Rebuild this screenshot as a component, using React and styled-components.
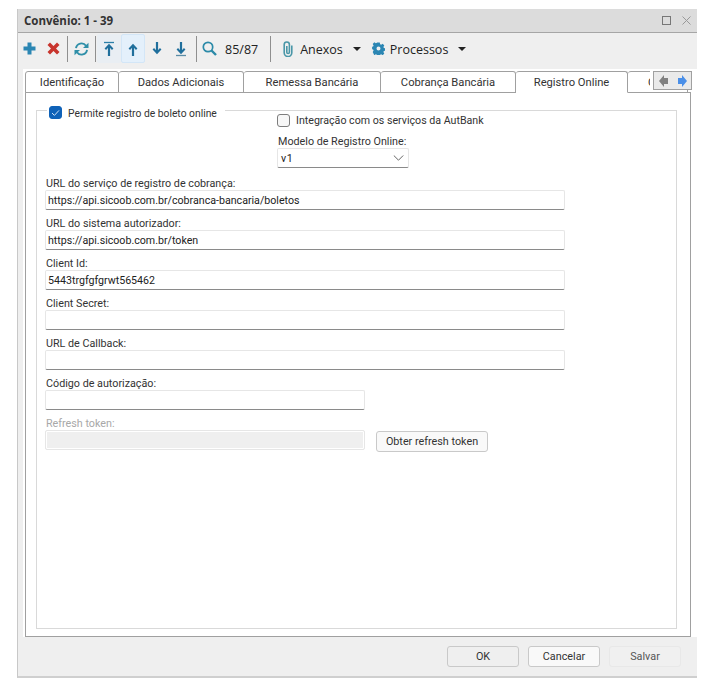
import React from "react";
import styled, { createGlobalStyle } from "styled-components";

const Global = createGlobalStyle`
  html, body { margin: 0; padding: 0; background: #fff; }
  body { font-family: "Roboto", "Liberation Sans", sans-serif; }
`;

const Page = styled.div`
  width: 712px;
  height: 693px;
  padding: 9px 15px 0 17px;
  box-sizing: border-box;
`;

const Dialog = styled.div`
  width: 680px;
  height: 669px;
  box-sizing: border-box;
  background: #efefef;
  border-left: 1px solid #c8c8c8;
  border-bottom: 2px solid #cfcfcf;
  display: flex;
  flex-direction: column;
`;

const TitleBar = styled.div`
  height: 24px;
  flex: none;
  box-sizing: border-box;
  background: #dcdcdc;
  border-bottom: 1px solid #a6a6a6;
  display: flex;
  align-items: center;
  padding: 0 6px 0 6px;
  font-family: "Open Sans", sans-serif;
  font-size: 11.5px;
  font-weight: 700;
  color: #333;
`;

const TitleText = styled.span`
  flex: 1;
`;

const WinButton = styled.svg`
  width: 9px;
  height: 9px;
  margin-left: 11px;
  fill: none;
  stroke: ${(p) => p.$c || "#777"};
`;

const Toolbar = styled.div`
  height: 36px;
  flex: none;
  box-sizing: border-box;
  display: flex;
  align-items: center;
  padding-bottom: 5px;
`;

const ToolBtn = styled.div`
  width: ${(p) => p.$w || 24}px;
  height: 29px;
  flex: none;
  box-sizing: border-box;
  display: flex;
  align-items: center;
  justify-content: center;
  border-radius: 2px;
  background: ${(p) => (p.$on ? "#e4f0fb" : p.$soft ? "#e9eef3" : "transparent")};
  border: 1px solid ${(p) => (p.$on ? "#d3e6f7" : "transparent")};
`;

const Sep = styled.div`
  width: 1px;
  height: 26px;
  flex: none;
  margin-left: ${(p) => p.$l}px;
  margin-right: ${(p) => p.$r}px;
  background: #8f8f8f;
`;

const ToolText = styled.span`
  font-size: 12.5px;
  color: #222;
  font-family: "Open Sans", sans-serif;
  padding-top: 2px;
  margin-left: ${(p) => p.$ml || 0}px;
`;

const Caret = styled.span`
  width: 0;
  height: 0;
  margin-left: 10px;
  border-left: 4px solid transparent;
  border-right: 4px solid transparent;
  border-top: 4px solid #222;
`;

const Menu = styled.div`
  display: flex;
  align-items: center;
  margin-left: ${(p) => p.$ml}px;
`;

const Panel = styled.div`
  flex: 1;
  background: #fff;
  margin-left: 5px;
  padding: 1px 6px 0 2px;
  display: flex;
  flex-direction: column;
  min-height: 0;
`;

const TabStrip = styled.div`
  height: 23px;
  flex: none;
  position: relative;
  display: flex;
  align-items: flex-end;
  overflow: hidden;
  z-index: 1;
  margin-bottom: -1px;
  margin-right: -1px;
`;

const Tab = styled.div`
  height: 22px;
  width: ${(p) => p.$w}px;
  flex: none;
  box-sizing: border-box;
  display: flex;
  align-items: center;
  justify-content: ${(p) => (p.$clipped ? "flex-start" : "center")};
  padding-left: ${(p) => (p.$clipped ? 20 : 0)}px;
  white-space: nowrap;
  font-size: 11.2px;
  color: #333;
  background: #fff;
  border: 1px solid #a0a0a0;
  border-left-width: ${(p) => (p.$first ? 1 : 0)}px;
  border-bottom-color: ${(p) => (p.$active ? "#fff" : "#a0a0a0")};
  border-radius: 3px 3px 0 0;
`;

const TabScroller = styled.div`
  position: absolute;
  right: 0;
  top: 1px;
  width: 39px;
  height: 19px;
  box-sizing: border-box;
  background: #eaeaea;
  border: 1px solid #a0a0a0;
  box-shadow: -3px 0 0 #fff;
  display: flex;
  align-items: center;
  justify-content: space-between;
  padding: 0 4px 0 5px;
`;

const Sheet = styled.div`
  flex: 1;
  box-sizing: border-box;
  border: 1px solid #a0a0a0;
  padding: 17px 13px 7px 10px;
  display: flex;
  min-height: 0;
`;

const Group = styled.div`
  flex: 1;
  position: relative;
  box-sizing: border-box;
  border: 1px solid #d9d9d9;
  padding: 3px 8px 0 8px;
`;

const GroupLegend = styled.label`
  position: absolute;
  left: 10px;
  top: -5px;
  padding: 0 8px 0 2px;
  background: #fff;
  display: flex;
  align-items: flex-start;
  gap: 6px;
  font-size: 10.3px;
  line-height: 15px;
  height: 13px;
  color: #333;
`;

const Check = styled.span`
  width: 13px;
  height: 13px;
  flex: none;
  box-sizing: border-box;
  border-radius: 3px;
  display: flex;
  align-items: center;
  justify-content: center;
  background: ${(p) => (p.$on ? "#0f62b8" : "#f7f7f7")};
  border: 1px solid ${(p) => (p.$on ? "#0f62b8" : "#7d7d7d")};
`;

const TopRight = styled.div`
  margin-left: 232px;
  display: flex;
  flex-direction: column;
`;

const CheckRow = styled.label`
  display: flex;
  align-items: center;
  gap: 6px;
  font-size: 10.65px;
  color: #333;
  height: 13px;
`;

const Label = styled.div`
  font-size: 10.75px;
  line-height: 13px;
  padding-left: 1px;
  color: ${(p) => (p.$off ? "#a8a8a8" : "#333")};
`;

const Field = styled.div`
  margin-top: ${(p) => p.$mt || 7}px;
`;

const Input = styled.div`
  width: ${(p) => p.$w}px;
  height: 20px;
  box-sizing: border-box;
  display: flex;
  align-items: center;
  padding-left: 2px;
  font-size: 10.65px;
  color: #222;
  background: #fff;
  border: 1px solid #e6e6e6;
  border-bottom-color: #8a8a8a;
  border-radius: 2px;
`;

const DisabledInput = styled(Input)`
  background: #efefef;
  border: 1px solid #e6e6e6;
  outline: 1px solid #fff;
  outline-offset: -2px;
`;

const Select = styled(Input)`
  justify-content: space-between;
  padding: 0 4px 0 3px;
  letter-spacing: 0.6px;
`;

const Row = styled.div`
  display: flex;
  align-items: flex-start;
  gap: 11px;
`;

const Button = styled.div`
  width: ${(p) => p.$w}px;
  height: 21px;
  flex: none;
  box-sizing: border-box;
  display: flex;
  align-items: center;
  justify-content: center;
  font-size: 10.8px;
  color: ${(p) => (p.$off ? "#555" : "#333")};
  background: ${(p) => (p.$off ? "#f0f0f0" : "#f9f9f9")};
  border: 1px solid ${(p) => (p.$off ? "#e8e8e8" : "#c9c9c9")};
  border-radius: 3px;
`;

const RowButton = styled(Button)`
  margin-top: 1px;
`;

const OkButton = styled(Button)`
  background: #efefef;
`;

const Footer = styled.div`
  height: 39px;
  flex: none;
  display: flex;
  align-items: center;
  justify-content: flex-end;
  gap: 9px;
  padding-right: 16px;
`;

const PlusIcon = () => (
  <svg width="13" height="13" viewBox="0 0 13 13">
    <path d="M4.500.5h4v4h4v4h-4v4h-4v-4h-4v-4h4z" fill="#2b86b3" />
  </svg>
);

const CrossIcon = () => (
  <svg width="13" height="13" viewBox="0 0 13 13">
    <path d="M3 .5l3.500 3.500L10 .5l2.500 2.500L9 6.500l3.500 3.500L10 12.500 6.500 9 3 12.500.5 10 4 6.500.5 3z" fill="#c8352d" />
  </svg>
);

const RefreshIcon = () => (
  <svg width="15" height="14" viewBox="0 0 15 14" fill="none">
    <path d="M2 6.200A5.500 5.500 0 0 1 12 3.800" stroke="#2f8fa8" strokeWidth="1.900" />
    <path d="M9 6h5.500V.8z" fill="#2f8fa8" />
    <path d="M13 7.800A5.500 5.500 0 0 1 3 10.200" stroke="#2f8fa8" strokeWidth="1.900" />
    <path d="M6 8H.5v5.200z" fill="#2f8fa8" />
  </svg>
);

const ArrowIcon = ({ up, bar }) => (
  <svg width="12" height="16" viewBox="0 0 12 16" fill="none">
    <g transform={up ? undefined : "rotate(180 6 8)"}>
      {bar && <path d="M1 1.500h10" stroke={up ? "#2b7fa8" : "#5a8ca6"} strokeWidth="1.300" />}
      <path d="M6 15V5" stroke="#206f9c" strokeWidth="2.200" />
      <path d="M2.300 8.300L6 4.300l3.700 4" stroke="#206f9c" strokeWidth="2" />
    </g>
  </svg>
);

const SearchIcon = () => (
  <svg width="15" height="15" viewBox="0 0 15 15" fill="none">
    <circle cx="6" cy="6" r="4.700" stroke="#2b8aa8" strokeWidth="1.700" />
    <path d="M9.500 9.500L14 14" stroke="#2b8aa8" strokeWidth="2.400" />
  </svg>
);

const ClipIcon = () => (
  <svg width="10" height="16" viewBox="0 0 10 16" fill="none">
    <path d="M8.800 4.500v7.300a3.800 3.800 0 0 1-7.600 0V3.600a2.600 2.600 0 0 1 5.200 0v7.600a1.300 1.300 0 0 1-2.600 0V5" stroke="#4a97a8" strokeWidth="1.600" />
  </svg>
);

const GearIcon = () => (
  <svg width="13" height="13" viewBox="0 0 13 13">
    <path
      fillRule="evenodd"
      d="M5.200.5h2.600l.3 1.700 1.100.5 1.500-.9 1.600 1.600-.9 1.500.5 1.100 1.600.3v2.400l-1.600.3-.5 1.100.9 1.500-1.600 1.600-1.500-.9-1.100.5-.3 1.600H5.200l-.3-1.600-1.100-.5-1.500.9L.7 10.100l.9-1.500-.5-1.100-1-.3V4.800l1-.3.5-1.100-.9-1.500 1.600-1.600 1.500.9 1.100-.5zM6.500 4.500a2 2 0 1 0 0 4 2 2 0 0 0 0-4z"
      fill="#2b86b3"
    />
  </svg>
);

const Chevron = () => (
  <svg width="11" height="6" viewBox="0 0 11 6" fill="none">
    <path d="M.8.500l4.700 4.700L10.200.500" stroke="#666" />
  </svg>
);

const Tick = () => (
  <svg width="9" height="8" viewBox="0 0 9 8" fill="none">
    <path d="M1 4l2.400 2.400L8 1.400" stroke="#cfe3f7" />
  </svg>
);

const TabArrow = ({ left, color }) => (
  <svg width="9" height="12" viewBox="0 0 9 12">
    <path d={left ? "M9 3v6H5v3L0 6l5-6v3z" : "M0 3v6h4v3l5-6-5-6v3z"} fill={color} />
  </svg>
);

const fields = [
  { label: "URL do serviço de registro de cobrança:", value: "https://api.sicoob.com.br/cobranca-bancaria/boletos", mt: 9 },
  { label: "URL do sistema autorizador:", value: "https://api.sicoob.com.br/token" },
  { label: "Client Id:", value: "5443trgfgfgrwt565462" },
  { label: "Client Secret:", value: "" },
  { label: "URL de Callback:", value: "" },
];

export default function App() {
  return (
    <Page>
      <Global />
      <Dialog>
        <TitleBar>
          <TitleText>Convênio: 1 - 39</TitleText>
          <WinButton viewBox="0 0 9 9"><rect x="0.5" y="0.5" width="8" height="8" /></WinButton>
          <WinButton viewBox="0 0 9 9" $c="#999"><path d="M.5.5l8 8M8.5.5l-8 8" /></WinButton>
        </TitleBar>
        <Toolbar>
          <ToolBtn $w={23}><PlusIcon /></ToolBtn>
          <ToolBtn><CrossIcon /></ToolBtn>
          <Sep $l={2} $r={1} />
          <ToolBtn><RefreshIcon /></ToolBtn>
          <Sep $l={2} $r={1} />
          <ToolBtn $soft><ArrowIcon up bar /></ToolBtn>
          <ToolBtn $on><ArrowIcon up /></ToolBtn>
          <ToolBtn><ArrowIcon /></ToolBtn>
          <ToolBtn><ArrowIcon bar /></ToolBtn>
          <Sep $l={3} $r={0} />
          <ToolBtn><SearchIcon /></ToolBtn>
          <ToolText $ml={4}>85/87</ToolText>
          <Sep $l={12} $r={0} />
          <Menu $ml={12}>
            <ClipIcon />
            <ToolText $ml={7}>Anexos</ToolText>
            <Caret />
          </Menu>
          <Menu $ml={11}>
            <GearIcon />
            <ToolText $ml={5}>Processos</ToolText>
            <Caret />
          </Menu>
        </Toolbar>
        <Panel>
          <TabStrip>
            <Tab $w={94} $first>Identificação</Tab>
            <Tab $w={125}>Dados Adicionais</Tab>
            <Tab $w={137}>Remessa Bancária</Tab>
            <Tab $w={135}>Cobrança Bancária</Tab>
            <Tab $w={112} $active>Registro Online</Tab>
            <Tab $w={60} $clipped>Comunicação</Tab>
            <TabScroller>
              <TabArrow left color="#808080" />
              <TabArrow color="#4a8fe8" />
            </TabScroller>
          </TabStrip>
          <Sheet>
            <Group>
              <GroupLegend>
                <Check $on><Tick /></Check>
                Permite registro de boleto online
              </GroupLegend>
              <TopRight>
                <CheckRow>
                  <Check />
                  Integração com os serviços da AutBank
                </CheckRow>
                <Field $mt={8}>
                  <Label>Modelo de Registro Online:</Label>
                  <Select $w={132}>
                    v1
                    <Chevron />
                  </Select>
                </Field>
              </TopRight>
              {fields.map((f) => (
                <Field key={f.label} $mt={f.mt}>
                  <Label>{f.label}</Label>
                  <Input $w={520}>{f.value}</Input>
                </Field>
              ))}
              <Field>
                <Label>Código de autorização:</Label>
                <Input $w={320} />
              </Field>
              <Field>
                <Label $off>Refresh token:</Label>
                <Row>
                  <DisabledInput $w={320} />
                  <RowButton $w={112}>Obter refresh token</RowButton>
                </Row>
              </Field>
            </Group>
          </Sheet>
        </Panel>
        <Footer>
          <OkButton $w={72}>OK</OkButton>
          <Button $w={72}>Cancelar</Button>
          <Button $w={72} $off>Salvar</Button>
        </Footer>
      </Dialog>
    </Page>
  );
}
